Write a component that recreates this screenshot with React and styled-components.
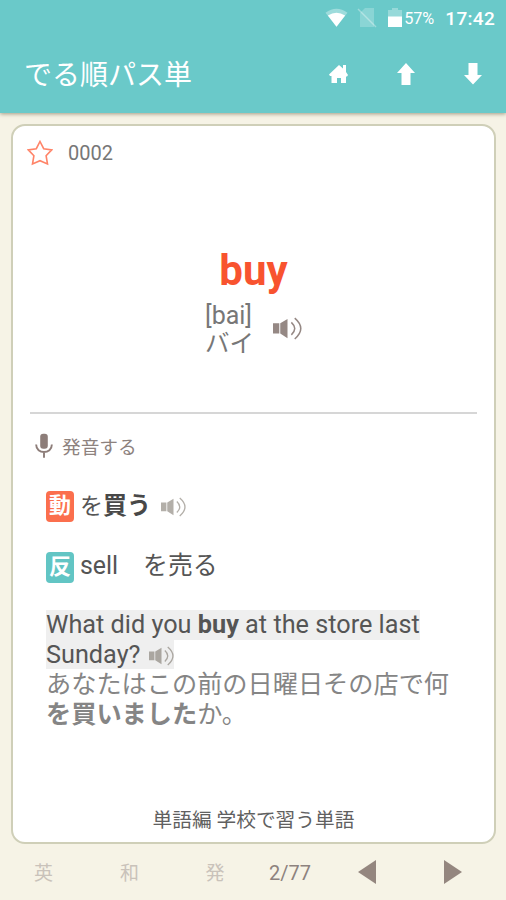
import React from 'react';
import styled, { createGlobalStyle } from 'styled-components';

const GlobalStyle = createGlobalStyle`
  * {
    box-sizing: border-box;
  }
  body {
    margin: 0;
    background: #f6f3e6;
    font-family: Roboto, 'Noto Sans CJK JP', sans-serif;
  }
  svg {
    display: block;
    flex: none;
  }
`;

const Screen = styled.div`
  height: 900px;
  display: flex;
  flex-direction: column;
  overflow: hidden;
`;

const Header = styled.header`
  height: 113px;
  flex: none;
  background: #6ac9c9;
  color: #fff;
  box-shadow: 0 1px 4px rgba(90, 80, 50, 0.55);
`;

const StatusBar = styled.div`
  height: 36px;
  display: flex;
  align-items: center;
  justify-content: flex-end;
  padding-right: 11px;
`;

const Battery = styled.span`
  width: 41px;
  margin-left: 2px;
  font-size: 16.3px;
  letter-spacing: -0.2px;
`;

const Clock = styled.span`
  font-size: 19px;
  font-weight: 500;
  letter-spacing: 0.3px;
`;

const StatusIcon = styled.svg`
  margin-right: ${props => props.$gap || 0}px;
`;

const Toolbar = styled.div`
  height: 77px;
  display: flex;
  align-items: center;
  padding: 0 24px;
`;

const Title = styled.h1`
  margin: 0;
  padding-top: 2px;
  flex: 1;
  font-size: 28px;
  font-weight: 400;
  line-height: 40px;
`;

const Actions = styled.div`
  display: flex;
  gap: 49px;
  padding-bottom: 2px;
`;

const Card = styled.main`
  height: 720px;
  flex: none;
  margin: 11px 10px 0 11px;
  padding: 0 16px;
  display: flex;
  flex-direction: column;
  background: #fff;
  border: 2px solid #cfcfb8;
  border-radius: 14px;
`;

const CardHead = styled.div`
  height: 54px;
  display: flex;
  align-items: center;
  gap: 15px;
  padding-left: 14px;
  margin-left: -16px;
  color: #777;
  font-size: 20px;
`;

const WordPane = styled.div`
  height: 234px;
  margin: 0 1px;
  padding-top: 67px;
  border-bottom: 2px solid #d6d6d6;
  text-align: center;
`;

const Word = styled.div`
  color: #f8532f;
  font-size: 42px;
  font-weight: 700;
  line-height: 48px;
`;

const Reading = styled.div`
  display: flex;
  justify-content: center;
  align-items: center;
  gap: 19px;
  margin-top: 7px;
  color: #777;
  font-size: 24.5px;
  line-height: 28px;
  text-align: left;
`;

const Phonetic = styled.div`
  font-size: 25px;
`;

const Pronounce = styled.div`
  height: 62px;
  display: flex;
  align-items: center;
  gap: 9px;
  padding-left: 6px;
  color: #8d827e;
  font-size: 18.7px;

  svg {
    margin-top: 1px;
  }
`;

const Meaning = styled.div`
  height: 61px;
  display: flex;
  align-items: center;
  padding-left: 17px;
  color: #555;
  font-size: 24.5px;
  white-space: pre;
`;

const MeaningText = styled.span`
  padding-bottom: ${props => props.$lift || 6}px;
  font-size: ${props => props.$size || 24.5}px;

  b {
    color: #484848;
    font-size: 24px;
  }
`;

const Tag = styled.span`
  width: 28px;
  height: 31px;
  margin-right: 6px;
  border-radius: 4px;
  background: ${props => props.$color};
  color: #fff;
  font-size: 22px;
  font-weight: 700;
  line-height: 30px;
  text-align: center;
`;

const Example = styled.div`
  margin-top: 12px;
  padding-left: 17px;
  color: #555;
  font-size: 25.25px;
  line-height: 30px;
`;

const Sentence = styled.div`
  width: max-content;
  height: ${props => props.$height || 30}px;
  display: flex;
  align-items: center;
  white-space: pre;
  background: #efefef;
`;

const Translation = styled.div`
  padding-top: 1px;
  color: #858585;
  font-size: 25.2px;
  line-height: 29.5px;
  white-space: nowrap;
`;

const Chapter = styled.div`
  margin: auto 0 6px;
  color: #606060;
  font-size: 19.7px;
  line-height: 30px;
  text-align: center;
`;

const Footer = styled.footer`
  height: 56px;
  display: grid;
  grid-template-columns: 87px 85px 86px 64px 89px 84px;
  align-items: center;
  justify-items: center;
  color: #8d827e;
  font-size: 20px;
`;

const Toggle = styled.span`
  padding-bottom: 2px;
  color: #c9c2ba;
  font-size: 19px;
`;

const Count = styled.span`
  padding-top: 2px;
`;

const SpeakerIcon = styled(({ size, className }) => (
  <svg className={className} width={size} height={size * 0.8} viewBox="0 0 30 24">
    <path fill="currentColor" d="M0 6.500h6.500v10.500H0zM7.500 6.500l7.500-4.500v20l-7.500-5z" />
    <path
      fill="none"
      stroke="currentColor"
      strokeWidth="1.600"
      d="M19 5.500q7 6.500 0 13M22.500 1.200q12.500 10.800 0 21.600"
    />
  </svg>
))`
  margin-left: ${props => props.$left || 0}px;
  margin-top: ${props => props.$top || 0}px;
  color: ${props => props.$color || '#958884'};
`;

const Arrow = ({ down }) => (
  <svg width="18" height="22" viewBox="0 0 18 22">
    <path fill="#fff" d={down ? 'M4.500 0h9v12H18l-9 9.500L0 12h4.500z' : 'M9 0l9 10h-4.500v12h-9V10H0z'} />
  </svg>
);

function App() {
  return (
    <Screen>
      <GlobalStyle />
      <Header>
        <StatusBar>
          <StatusIcon $gap={9} width="23" height="20" viewBox="0 0 24 20">
            <path fill="#fff" opacity=".35" d="M0.500 4.500Q12-4 23.500 4.500L12 19z" />
            <path fill="#fff" d="M3 7.500q9-6 18 0L12 19z" />
          </StatusIcon>
          <StatusIcon $gap={11} width="20" height="20" viewBox="0 0 20 20">
            <path fill="#fff" opacity=".22" d="M8 0h9v19H3V5z" />
            <path stroke="#fff" strokeWidth="1.500" opacity=".35" d="M1 1l18 18" />
          </StatusIcon>
          <StatusIcon width="14" height="20" viewBox="0 0 14 20">
            <path fill="#fff" opacity=".3" d="M4 0h6v2h4v7H0V2h4z" />
            <path fill="#fff" d="M0 8.500h14V19H0z" />
          </StatusIcon>
          <Battery>57%</Battery>
          <Clock>17:42</Clock>
        </StatusBar>
        <Toolbar>
          <Title>でる順パス単</Title>
          <Actions>
            <svg width="19" height="20" viewBox="0 0 19 20">
              <path
                fill="#fff"
                d="M10 2l4 3.500V2h3v7l2 3-1 1.500h-1V20h-5v-5H8v5H2.500v-7H1l-1-1.500z"
              />
            </svg>
            <Arrow />
            <Arrow down />
          </Actions>
        </Toolbar>
      </Header>
      <Card>
        <CardHead>
          <svg width="26" height="26" viewBox="0 0 26 26">
            <path
              fill="none"
              stroke="#ff8468"
              strokeWidth="1.600"
              d="M13 1.500l3.700 7.200 8 1.200-5.600 5.800 1.400 8.300L13 20.700 5.500 24l1.400-8.300-5.600-5.800 8-1.200z"
            />
          </svg>
          0002
        </CardHead>
        <WordPane>
          <Word>buy</Word>
          <Reading>
            <div>
              <Phonetic>[bai]</Phonetic>
              バイ
            </div>
            <SpeakerIcon size={29} $top={-2} />
          </Reading>
        </WordPane>
        <Pronounce>
          <svg width="18" height="26" viewBox="0 0 19 26">
            <rect x="5.500" y="0" width="8" height="16" rx="3.200" fill="#8d7d79" />
            <path fill="none" stroke="#8d7d79" strokeWidth="2" d="M1.200 11.500c0 10.500 16.600 10.500 16.600 0M9.500 19v6.500" />
          </svg>
          発音する
        </Pronounce>
        <Meaning>
          <Tag $color="#fb6f4d">動</Tag>
          <MeaningText $size={23}>を<b>買う</b></MeaningText>
          <SpeakerIcon size={25} $left={10} $top={1} $color="#b3afa9" />
        </Meaning>
        <Meaning>
          <Tag $color="#62c5c4">反</Tag>
          <MeaningText $size={24.9} $lift={9}>sell　を売る</MeaningText>
        </Meaning>
        <Example>
          <Sentence>What did you <b>buy</b> at the store last</Sentence>
          <Sentence $height={29}>
            Sunday?
            <SpeakerIcon size={25} $left={8} $top={2} $color="#aaa6a0" />
          </Sentence>
          <Translation>
            あなたはこの前の日曜日その店で何
            <br />
            <b>を買いました</b>か。
          </Translation>
        </Example>
        <Chapter>単語編 学校で習う単語</Chapter>
      </Card>
      <Footer>
        <Toggle>英</Toggle>
        <Toggle>和</Toggle>
        <Toggle>発</Toggle>
        <Count>2/77</Count>
        <svg width="18" height="24" viewBox="0 0 18 24">
          <path fill="#94867f" d="M18 0v24L0 12z" />
        </svg>
        <svg width="18" height="24" viewBox="0 0 18 24">
          <path fill="#94867f" d="M0 0v24l18-12z" />
        </svg>
      </Footer>
    </Screen>
  );
}

export default App;
